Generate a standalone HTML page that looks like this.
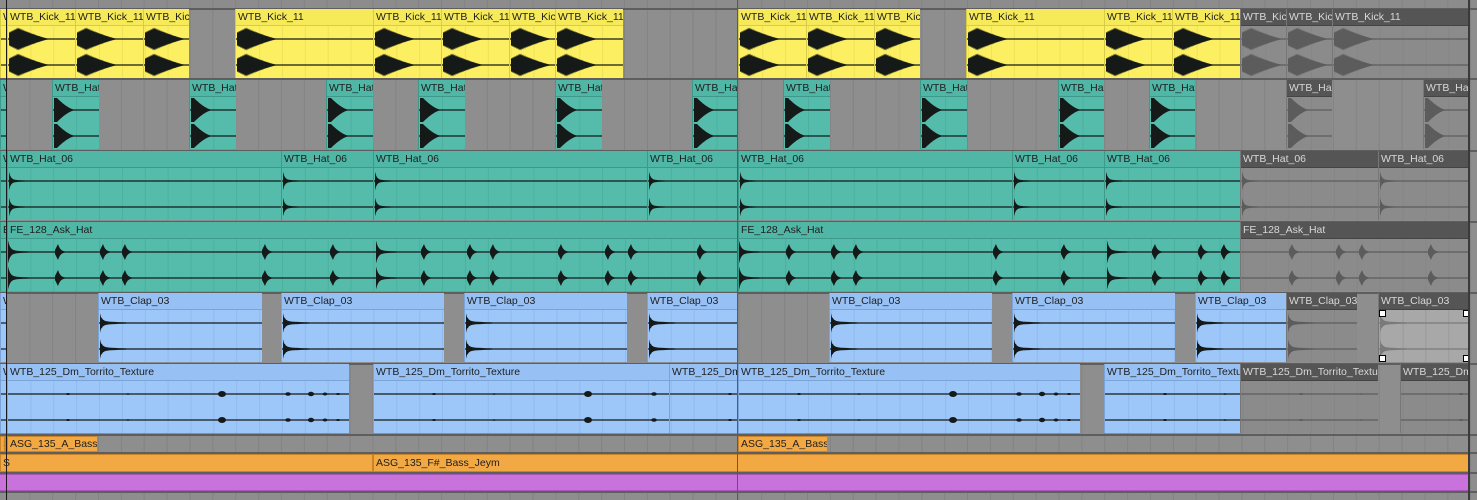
<!DOCTYPE html>
<html><head><meta charset="utf-8"><style>
html,body{margin:0;padding:0;width:1477px;height:500px;overflow:hidden;background:#8e8e8e;font-family:"Liberation Sans",sans-serif}
#c{position:relative;width:1477px;height:500px}
.a{position:absolute}
.h{position:absolute;left:0;right:0;top:0;height:17px;font-size:10.5px;line-height:17px;padding-left:2px;white-space:nowrap;overflow:hidden;color:#1e1e1e;box-sizing:border-box}
</style></head><body><div id="c"></div>
<script>
const C=document.getElementById('c');
function el(x,y,w,h,st,html){const d=document.createElement('div');d.className='a';d.style.cssText=`left:${x}px;top:${y}px;width:${w}px;height:${h}px;`+(st||'');if(html)d.innerHTML=html;C.appendChild(d);return d;}
el(0,0,1477,8,'background:#8c8c8c');
let grid='';
for(let x=7;x<1477;x+=22.87){grid+=`<line x1="${x.toFixed(1)}" y1="0" x2="${x.toFixed(1)}" y2="500" stroke="#838383" stroke-width="1"/>`;}
el(0,0,1477,500,'','<svg width="1477" height="500">'+grid+'</svg>');
const tracks=[
 {y:9,h:70,col:'#fcef62',hd:'#f7ea5a',ln:'#d9cc45',type:'kick',clips:[[0,7,'WT'],[7,75,'WTB_Kick_11'],[75,143,'WTB_Kick_11'],[143,189,'WTB_Kic'],[235,373,'WTB_Kick_11'],[373,441,'WTB_Kick_11'],[441,509,'WTB_Kick_11'],[509,555,'WTB_Kic'],[555,623,'WTB_Kick_11'],[738,806,'WTB_Kick_11'],[806,874,'WTB_Kick_11'],[874,920,'WTB_Kic'],[966,1104,'WTB_Kick_11'],[1104,1172,'WTB_Kick_11'],[1172,1240,'WTB_Kick_11'],[1240,1286,'WTB_Kic',1],[1286,1332,'WTB_Kic',1],[1332,1469,'WTB_Kick_11',1]]},
 {y:80,h:70,col:'#55bcab',hd:'#50b6a5',ln:'#3d9a8a',type:'hat',clips:[[0,7,'WT'],[52,99,'WTB_Hat'],[189,236,'WTB_Hat'],[326,373,'WTB_Hat'],[418,465,'WTB_Hat'],[555,602,'WTB_Hat'],[692,738,'WTB_Hat'],[783,830,'WTB_Hat'],[920,967,'WTB_Hat'],[1058,1104,'WTB_Hat'],[1149,1195,'WTB_Hat'],[1286,1332,'WTB_Hat',1],[1423,1469,'WTB_Hat',1]]},
 {y:151,h:70,col:'#55bcab',hd:'#50b6a5',ln:'#3d9a8a',type:'hat6',clips:[[0,7,'W'],[7,281,'WTB_Hat_06'],[281,373,'WTB_Hat_06'],[373,647,'WTB_Hat_06'],[647,738,'WTB_Hat_06'],[738,1012,'WTB_Hat_06'],[1012,1104,'WTB_Hat_06'],[1104,1240,'WTB_Hat_06'],[1240,1378,'WTB_Hat_06',1],[1378,1469,'WTB_Hat_06',1]]},
 {y:222,h:70,col:'#55bcab',hd:'#50b6a5',ln:'#3d9a8a',type:'ask',clips:[[0,7,'E'],[7,738,'FE_128_Ask_Hat'],[738,1240,'FE_128_Ask_Hat'],[1240,1469,'FE_128_Ask_Hat',1]]},
 {y:293,h:70,col:'#9dc6f9',hd:'#97c1f5',ln:'#7aa4d8',type:'clap',clips:[[0,7,'W'],[98,262,'WTB_Clap_03'],[281,444,'WTB_Clap_03'],[464,627,'WTB_Clap_03'],[647,738,'WTB_Clap_03'],[829,992,'WTB_Clap_03'],[1012,1175,'WTB_Clap_03'],[1195,1286,'WTB_Clap_03'],[1286,1357,'WTB_Clap_03',1],[1378,1469,'WTB_Clap_03',2]]},
 {y:364,h:70,col:'#9dc6f9',hd:'#97c1f5',ln:'#7aa4d8',type:'tex',clips:[[0,7,'W'],[7,349,'WTB_125_Dm_Torrito_Texture'],[373,669,'WTB_125_Dm_Torrito_Texture'],[669,738,'WTB_125_Dm'],[738,1080,'WTB_125_Dm_Torrito_Texture'],[1104,1240,'WTB_125_Dm_Torrito_Texture'],[1240,1378,'WTB_125_Dm_Torrito_Texture',1],[1400,1469,'WTB_125_Dm',1]]}
];
[8,78,150,221,292,363,434,452,472,491].forEach(y=>el(0,y,1477,2,'background:#5e5e5e'));
function env(type,x0,w,cy){
 const f=(t)=>{
  if(type=='kick'){let a=t<9?7+5*(t/9):12*Math.pow(Math.max(0,1-(t-9)/33),1.3);return a*(t%2<1?1:0.82);}
  if(type=='hat'){return t<3?12:12*Math.pow(Math.max(0,1-(t-3)/19),1.6);}
  if(type=='hat6'){return 8*Math.exp(-t/1.8)+1.2*Math.max(0,1-t/28);}
  if(type=='clap'){return (8*Math.exp(-t/2.2)+1.8*Math.max(0,1-t/40))*(t%2<1?1:0.85);}
  if(type=='askbig'){return 10*Math.exp(-t/2.2)+1.5*Math.max(0,1-t/32);}
  if(type=='ask'){return t<3?2+t*2:Math.max(0,8*Math.exp(-(t-3)/2.5));}
 };
 let L=type=='kick'?43:type=='hat'?23:40;L=Math.min(L,w);
 let top=[],bot=[];
 for(let t=0;t<=L;t+=1){let a=f(t);if(!isFinite(a))a=0;a=Math.min(a,13);top.push(`${(x0+t).toFixed(1)},${(cy-a).toFixed(1)}`);bot.unshift(`${(x0+t).toFixed(1)},${(cy+a).toFixed(1)}`);}
 return `<polygon points="${top.concat(bot).join(' ')}"/>`;
}
const askHits=[7,54,99,121,261,329,375,420,466,489,557,604,627,696];
tracks.forEach(tr=>{
 tr.clips.forEach(c=>{
  const [x1,x2,lab,g]=c;const w=x2-x1;
  const body=g==2?'#a8a8a8':g?'#8b8b8b':tr.col;
  const hd=g?'#555':tr.hd;
  const tc=g?'#d8d8d8':'#1e1e1e';
  const wf=g==2?'#7a7a7a':g?'#5c5c5c':'#151a18';
  const d=el(x1,tr.y,w,tr.h-1,`background:${body};overflow:hidden;box-sizing:border-box;border-left:1px solid ${g?'#777':tr.ln}`);
  let s=`<svg class="a" style="left:0;top:0" width="${w}" height="${tr.h}">`;
  for(let x=7;x<1477;x+=22.87){const lx=x-x1;if(lx>1&&lx<w)s+=`<line x1="${lx.toFixed(1)}" y1="17" x2="${lx.toFixed(1)}" y2="${tr.h}" stroke="${g?'#7d7d7d':tr.ln}" stroke-opacity="0.35"/>`;}
  s+=`<g fill="${wf}">`;
  [30,56].forEach(cy=>{
   s+=`<line x1="0" y1="${cy}" x2="${w}" y2="${cy}" stroke="${wf}" stroke-width="1.2"/>`;
   if(tr.type=='ask'){
    askHits.forEach(h=>{[0,731].forEach(o=>{const hx=h+o-x1;if(hx>=0&&hx<w){const big=(h==7||h==375);s+=env(big?'askbig':'ask',hx,w-hx,cy);}});});
   }else if(tr.type=='tex'){
    [[60,1],[120,0.8],[214,3],[280,1.8],[303,2.2],[317,1.5],[330,1]].forEach(([p,r])=>{if(p<w-5)s+=`<ellipse cx="${p}" cy="${cy}" rx="${r+1}" ry="${r}"/>`;});
   }else if(x1>0){s+=env(tr.type,1,w,cy);}
  });
  s+='</g></svg>';
  d.innerHTML=s+`<div class="h" style="background:${hd};color:${tc};border-bottom:1px solid ${g?'#444':tr.ln}">${lab}</div>`;
  if(g==2){[[0,17],[w-7,17],[0,tr.h-8],[w-7,tr.h-8]].forEach(([a,b])=>d.insertAdjacentHTML('beforeend',`<div class="a" style="left:${a}px;top:${b}px;width:5px;height:5px;border:1px solid #000;background:#fff"></div>`));}
 });
});
function small(x1,x2,y,h,col,lab){el(x1,y,x2-x1,h,`background:${col};font-size:10.5px;line-height:${h-2}px;padding-left:2px;box-sizing:border-box;white-space:nowrap;overflow:hidden;color:#1e1e1e;border:1px solid #c9842a`,lab);}
small(0,5,436,16,'#f2a944','S');
small(7,98,436,16,'#f2a944','ASG_135_A_Bass');
small(738,828,436,16,'#f2a944','ASG_135_A_Bass');
small(0,373,454,18,'#f2a944','S');
small(373,1469,454,18,'#f2a944','ASG_135_F#_Bass_Jeym');
el(0,474,1469,17,'background:#ca72dc;border-top:1px solid #a557b6;border-bottom:1px solid #a557b6;box-sizing:border-box');
el(6,0,1,500,'background:#1a1a1a');
el(737,0,1,500,'background:#5a5a5a');
el(1468,0,2,500,'background:#3a3a3a');
</script></body></html>
